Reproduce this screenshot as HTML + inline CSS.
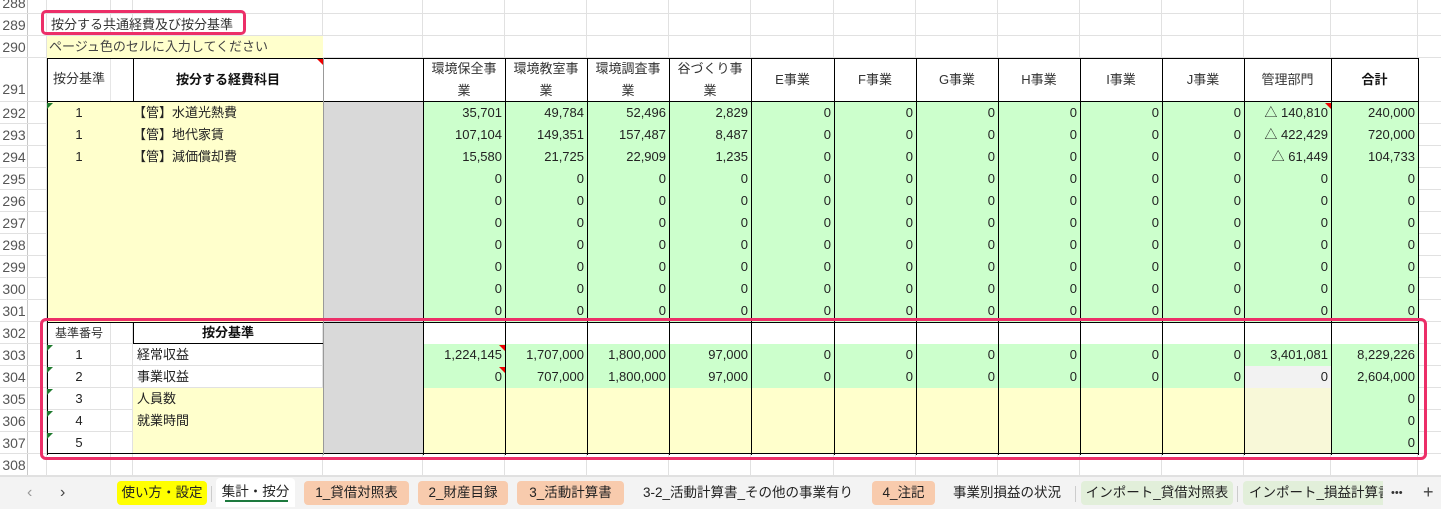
<!DOCTYPE html>
<html><head><meta charset="utf-8"><style>
*{margin:0;padding:0;box-sizing:border-box}
body{width:1441px;height:509px;overflow:hidden;background:#fff;position:relative;font-family:"Liberation Sans","Noto Sans CJK JP",sans-serif;font-size:13px;color:#222}
.a{position:absolute}
.v{position:absolute;width:1px;background:#e1e1e1;top:0;height:476px}
.h{position:absolute;height:1px;background:#e1e1e1;left:0;width:1441px}
.bv{position:absolute;width:1px;background:#000;top:58px;height:397px}
.bh{position:absolute;height:1px;background:#000;left:47px;width:1372px}
.rn{position:absolute;left:0;width:28px;text-align:center;font-size:14px;color:#555;height:22px;line-height:22px}
.r{position:absolute;left:423px;display:flex;height:22px;line-height:22px}
.r span{text-align:right;padding-right:3px;display:block}
.r span:nth-child(-n+4),.r span:nth-child(n+6):nth-child(-n+10){width:82px}
.r span:nth-child(5){width:83px}
.r span:nth-child(11),.r span:nth-child(12){width:87px}
.c1{position:absolute;left:47px;width:64px;text-align:center;height:22px;line-height:22px}
.tx{position:absolute;left:137px;height:22px;line-height:22px}
.hd{position:absolute;top:58px;height:44px;text-align:center;display:flex;align-items:center;justify-content:center;line-height:22px;color:#333}
.gt{position:absolute;left:47px;width:0;height:0;border-top:6px solid #1e7a2e;border-right:6px solid transparent}
.rt{position:absolute;width:0;height:0;border-top:6px solid #e00;border-left:6px solid transparent}
.tab{position:absolute;top:481px;height:24px;line-height:24px;font-size:13.5px;color:#222;text-align:center;border-radius:4px;white-space:nowrap;overflow:hidden}
</style></head><body>
<div class="v" style="left:27px;background:#c8c8c8"></div>
<div class="v" style="left:46px"></div><div class="v" style="left:110px"></div><div class="v" style="left:132px"></div><div class="v" style="left:322px"></div><div class="v" style="left:422px"></div>
<div class="v" style="left:504px"></div><div class="v" style="left:586px"></div><div class="v" style="left:668px"></div><div class="v" style="left:750px"></div><div class="v" style="left:833px"></div><div class="v" style="left:915px"></div><div class="v" style="left:997px"></div><div class="v" style="left:1079px"></div><div class="v" style="left:1161px"></div><div class="v" style="left:1243px"></div><div class="v" style="left:1330px"></div><div class="v" style="left:1417px"></div>
<div class="h" style="top:13px"></div><div class="h" style="top:35px"></div><div class="h" style="top:57px"></div><div class="h" style="top:101px"></div>
<div class="h" style="top:123px"></div><div class="h" style="top:145px"></div><div class="h" style="top:167px"></div><div class="h" style="top:189px"></div><div class="h" style="top:211px"></div><div class="h" style="top:233px"></div><div class="h" style="top:255px"></div><div class="h" style="top:277px"></div><div class="h" style="top:299px"></div><div class="h" style="top:321px"></div><div class="h" style="top:343px"></div><div class="h" style="top:365px"></div><div class="h" style="top:387px"></div><div class="h" style="top:409px"></div><div class="h" style="top:431px"></div><div class="h" style="top:453px"></div><div class="h" style="top:475px"></div>
<div class="a" style="left:47px;top:36px;width:276px;height:22px;background:#ffffcc"></div>
<div class="a" style="left:47px;top:58px;width:1371px;height:44px;background:#fff"></div>
<div class="a" style="left:110px;top:58px;width:1px;height:44px;background:#e6e6e6"></div>
<div class="a" style="left:47px;top:102px;width:276px;height:220px;background:#ffffcc"></div>
<div class="a" style="left:323px;top:102px;width:100px;height:352px;background:#d9d9d9"></div>
<div class="a" style="left:423px;top:102px;width:995px;height:220px;background:#ccffcc"></div>
<div class="a" style="left:423px;top:322px;width:995px;height:22px;background:#fff"></div>
<div class="a" style="left:423px;top:344px;width:995px;height:44px;background:#ccffcc"></div>
<div class="a" style="left:1244px;top:366px;width:87px;height:22px;background:#f2f2f2"></div>
<div class="a" style="left:133px;top:388px;width:190px;height:66px;background:#ffffcc"></div>
<div class="a" style="left:423px;top:388px;width:821px;height:66px;background:#ffffcc"></div>
<div class="a" style="left:1244px;top:388px;width:87px;height:66px;background:#f8f8d8"></div>
<div class="a" style="left:1331px;top:388px;width:87px;height:66px;background:#ccffcc"></div>
<div class="bh" style="top:58px"></div><div class="bh" style="top:101px"></div><div class="bh" style="top:322px"></div><div class="bh" style="top:453px"></div>
<div class="a" style="left:133px;top:343px;width:190px;height:1px;background:#000"></div>
<div class="bv" style="left:47px"></div>
<div class="a" style="left:133px;top:58px;width:1px;height:44px;background:#000"></div>
<div class="a" style="left:133px;top:322px;width:1px;height:22px;background:#000"></div>
<div class="bv" style="left:323px;background:#999"></div>
<div class="bv" style="left:423px"></div><div class="bv" style="left:505px"></div><div class="bv" style="left:587px"></div><div class="bv" style="left:669px"></div><div class="bv" style="left:751px"></div><div class="bv" style="left:834px"></div><div class="bv" style="left:916px"></div><div class="bv" style="left:998px"></div><div class="bv" style="left:1080px"></div><div class="bv" style="left:1162px"></div><div class="bv" style="left:1244px"></div><div class="bv" style="left:1331px"></div><div class="bv" style="left:1418px"></div>
<div class="rn" style="top:-8px">288</div><div class="rn" style="top:14px">289</div><div class="rn" style="top:36px">290</div><div class="rn" style="top:78px">291</div>
<div class="rn" style="top:102px">292</div><div class="rn" style="top:124px">293</div><div class="rn" style="top:146px">294</div><div class="rn" style="top:168px">295</div><div class="rn" style="top:190px">296</div><div class="rn" style="top:212px">297</div><div class="rn" style="top:234px">298</div><div class="rn" style="top:256px">299</div><div class="rn" style="top:278px">300</div><div class="rn" style="top:300px">301</div><div class="rn" style="top:322px">302</div><div class="rn" style="top:344px">303</div><div class="rn" style="top:366px">304</div><div class="rn" style="top:388px">305</div><div class="rn" style="top:410px">306</div><div class="rn" style="top:432px">307</div><div class="rn" style="top:454px">308</div>
<div class="a" style="left:51px;top:14px;line-height:22px;color:#333">按分する共通経費及び按分基準</div>
<div class="a" style="left:49px;top:36px;line-height:22px;color:#444">ページュ色のセルに入力してください</div>
<div class="hd" style="left:47px;width:64px;align-items:flex-start;padding-top:10px">按分基準</div>
<div class="hd" style="left:133px;width:190px;font-weight:bold;color:#111">按分する経費科目</div>
<div class="hd" style="left:423px;width:82px">環境保全事<br>業</div>
<div class="hd" style="left:505px;width:82px">環境教室事<br>業</div>
<div class="hd" style="left:587px;width:82px">環境調査事<br>業</div>
<div class="hd" style="left:669px;width:82px">谷づくり事<br>業</div>
<div class="hd" style="left:751px;width:83px">E事業</div>
<div class="hd" style="left:834px;width:82px">F事業</div>
<div class="hd" style="left:916px;width:82px">G事業</div>
<div class="hd" style="left:998px;width:82px">H事業</div>
<div class="hd" style="left:1080px;width:82px">I事業</div>
<div class="hd" style="left:1162px;width:82px">J事業</div>
<div class="hd" style="left:1244px;width:87px">管理部門</div>
<div class="hd" style="left:1331px;width:87px;font-weight:bold;color:#111">合計</div>
<div class="rt" style="left:317px;top:59px"></div>
<div class="rt" style="left:1325px;top:103px"></div>
<div class="rt" style="left:499px;top:345px"></div>
<div class="rt" style="left:499px;top:367px"></div>
<div class="gt" style="top:103px"></div>
<div class="gt" style="top:345px"></div><div class="gt" style="top:367px"></div><div class="gt" style="top:389px"></div><div class="gt" style="top:411px"></div><div class="gt" style="top:433px"></div>
<div class="c1" style="top:102px">1</div><div class="tx" style="top:102px;left:133px">【管】水道光熱費</div>
<div class="c1" style="top:124px">1</div><div class="tx" style="top:124px;left:133px">【管】地代家賃</div>
<div class="c1" style="top:146px">1</div><div class="tx" style="top:146px;left:133px">【管】減価償却費</div>
<div class="r" style="top:102px"><span>35,701</span><span>49,784</span><span>52,496</span><span>2,829</span><span>0</span><span>0</span><span>0</span><span>0</span><span>0</span><span>0</span><span>△ 140,810</span><span>240,000</span></div>
<div class="r" style="top:124px"><span>107,104</span><span>149,351</span><span>157,487</span><span>8,487</span><span>0</span><span>0</span><span>0</span><span>0</span><span>0</span><span>0</span><span>△ 422,429</span><span>720,000</span></div>
<div class="r" style="top:146px"><span>15,580</span><span>21,725</span><span>22,909</span><span>1,235</span><span>0</span><span>0</span><span>0</span><span>0</span><span>0</span><span>0</span><span>△ 61,449</span><span>104,733</span></div>
<div class="r" style="top:168px"><span>0</span><span>0</span><span>0</span><span>0</span><span>0</span><span>0</span><span>0</span><span>0</span><span>0</span><span>0</span><span>0</span><span>0</span></div>
<div class="r" style="top:190px"><span>0</span><span>0</span><span>0</span><span>0</span><span>0</span><span>0</span><span>0</span><span>0</span><span>0</span><span>0</span><span>0</span><span>0</span></div>
<div class="r" style="top:212px"><span>0</span><span>0</span><span>0</span><span>0</span><span>0</span><span>0</span><span>0</span><span>0</span><span>0</span><span>0</span><span>0</span><span>0</span></div>
<div class="r" style="top:234px"><span>0</span><span>0</span><span>0</span><span>0</span><span>0</span><span>0</span><span>0</span><span>0</span><span>0</span><span>0</span><span>0</span><span>0</span></div>
<div class="r" style="top:256px"><span>0</span><span>0</span><span>0</span><span>0</span><span>0</span><span>0</span><span>0</span><span>0</span><span>0</span><span>0</span><span>0</span><span>0</span></div>
<div class="r" style="top:278px"><span>0</span><span>0</span><span>0</span><span>0</span><span>0</span><span>0</span><span>0</span><span>0</span><span>0</span><span>0</span><span>0</span><span>0</span></div>
<div class="r" style="top:300px"><span>0</span><span>0</span><span>0</span><span>0</span><span>0</span><span>0</span><span>0</span><span>0</span><span>0</span><span>0</span><span>0</span><span>0</span></div>
<div class="c1" style="top:322px;font-size:12px;color:#333">基準番号</div>
<div class="a" style="left:133px;top:322px;width:190px;text-align:center;line-height:22px;font-weight:bold;color:#111">按分基準</div>
<div class="c1" style="top:344px">1</div><div class="tx" style="top:344px">経常収益</div>
<div class="c1" style="top:366px">2</div><div class="tx" style="top:366px">事業収益</div>
<div class="c1" style="top:388px">3</div><div class="tx" style="top:388px">人員数</div>
<div class="c1" style="top:410px">4</div><div class="tx" style="top:410px">就業時間</div>
<div class="c1" style="top:432px">5</div>
<div class="r" style="top:344px"><span>1,224,145</span><span>1,707,000</span><span>1,800,000</span><span>97,000</span><span>0</span><span>0</span><span>0</span><span>0</span><span>0</span><span>0</span><span>3,401,081</span><span>8,229,226</span></div>
<div class="r" style="top:366px"><span>0</span><span>707,000</span><span>1,800,000</span><span>97,000</span><span>0</span><span>0</span><span>0</span><span>0</span><span>0</span><span>0</span><span>0</span><span>2,604,000</span></div>
<div class="r" style="top:388px"><span></span><span></span><span></span><span></span><span></span><span></span><span></span><span></span><span></span><span></span><span></span><span>0</span></div>
<div class="r" style="top:410px"><span></span><span></span><span></span><span></span><span></span><span></span><span></span><span></span><span></span><span></span><span></span><span>0</span></div>
<div class="r" style="top:432px"><span></span><span></span><span></span><span></span><span></span><span></span><span></span><span></span><span></span><span></span><span></span><span>0</span></div>
<div class="a" style="left:41px;top:10px;width:205px;height:25px;border:3px solid #ec2f68;border-radius:5px"></div>
<div class="a" style="left:40px;top:318px;width:1387px;height:142px;border:3px solid #ec2f68;border-radius:6px"></div>
<div class="a" style="left:0;top:476px;width:1441px;height:33px;background:#f3f3f3;border-top:1px solid #e0e0e0"></div>
<div class="a" style="left:27px;top:482px;font-size:16px;color:#999;line-height:22px">&lsaquo;</div>
<div class="a" style="left:60px;top:482px;font-size:16px;color:#444;line-height:22px">&rsaquo;</div>
<div class="tab" style="left:117px;width:90px;background:#ffff00">使い方・設定</div>
<div class="a" style="left:211px;top:486px;width:1px;height:16px;background:#ccc"></div>
<div class="tab" style="left:216px;width:79px;top:478px;height:29px;line-height:28px;background:#fff;border-radius:4px 4px 0 0">集計・按分<div class="a" style="left:9px;top:22px;width:63px;height:2px;background:#1e7a3e"></div></div>
<div class="tab" style="left:304px;width:105px;background:#f8cbad">1_貸借対照表</div>
<div class="tab" style="left:418px;width:90px;background:#f8cbad">2_財産目録</div>
<div class="tab" style="left:517px;width:107px;background:#f8cbad">3_活動計算書</div>
<div class="tab" style="left:633px;width:230px">3-2_活動計算書_その他の事業有り</div>
<div class="tab" style="left:872px;width:63px;background:#f8cbad">4_注記</div>
<div class="tab" style="left:944px;width:126px">事業別損益の状況</div>
<div class="a" style="left:1075px;top:486px;width:1px;height:16px;background:#ccc"></div>
<div class="tab" style="left:1081px;width:152px;background:#e2efda">インポート_貸借対照表</div>
<div class="a" style="left:1237px;top:486px;width:1px;height:16px;background:#ccc"></div>
<div class="tab" style="left:1243px;width:140px;background:#e2efda;border-radius:4px 0 0 4px;text-align:left;padding-left:6px">インポート_損益計算書</div>
<div class="a" style="left:1391px;top:481px;line-height:24px;font-size:11px;color:#333">&bull;&bull;&bull;</div>
<div class="a" style="left:1423px;top:480px;line-height:24px;font-size:18px;color:#444">+</div>
</body></html>
